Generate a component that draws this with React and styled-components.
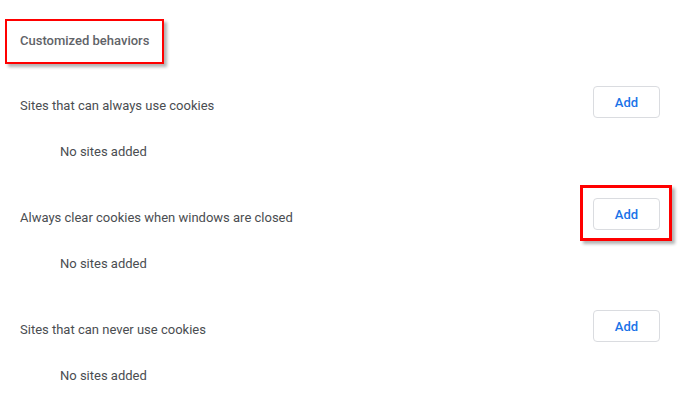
import styled, { createGlobalStyle } from 'styled-components';

const GlobalStyle = createGlobalStyle`
    body {
        margin: 0;
        background: #ffffff;
        font-family: Roboto, "Liberation Sans", sans-serif;
        font-size: 13px;
        color: #4a4d51;
    }
`;

const Page = styled.div`
    padding: 0 19px 0 20px;
`;

const HeadingWrap = styled.div`
    position: relative;
    display: inline-block;
    margin-top: 31px;
`;

const Heading = styled.h2`
    margin: 0;
    font-size: 13px;
    font-weight: 500;
    line-height: 20px;
    color: #5f6368;
`;

const Highlight = styled.div`
    position: absolute;
    top: ${(props) => props.top}px;
    left: ${(props) => props.left}px;
    right: ${(props) => props.right}px;
    bottom: ${(props) => props.bottom}px;
    border: ${(props) => props.thick}px solid #ff0000;
    box-shadow: 3px 3px 3px rgba(0, 0, 0, 0.3);
    pointer-events: none;
`;

const Section = styled.div`
    margin-top: ${(props) => (props.first ? '35px' : '36px')};
`;

const Row = styled.div`
    display: flex;
    align-items: center;
    justify-content: space-between;
    height: 32px;
`;

const Label = styled.div`
    padding-top: 8px;
    line-height: 16px;
`;

const ButtonWrap = styled.div`
    position: relative;
`;

const Button = styled.button`
    width: 67px;
    height: 32px;
    background: #ffffff;
    border: 1px solid #dadce0;
    border-radius: 4px;
    color: #1a73e8;
    font-family: Roboto, "Liberation Sans", sans-serif;
    font-size: 13px;
    font-weight: 500;
    cursor: pointer;
`;

const Empty = styled.div`
    margin-top: 24px;
    padding-left: 40px;
    line-height: 20px;
`;

const sections = [
    { label: 'Sites that can always use cookies' },
    { label: 'Always clear cookies when windows are closed', marked: true },
    { label: 'Sites that can never use cookies' },
];

const App = () => {
    return (
        <Page>
            <GlobalStyle />
            <HeadingWrap>
                <Heading>Customized behaviors</Heading>
                <Highlight top={-12} left={-15} right={-15} bottom={-13} thick={2} />
            </HeadingWrap>
            {sections.map((s, i) => (
                <Section key={s.label} first={i === 0}>
                    <Row>
                        <Label>{s.label}</Label>
                        <ButtonWrap>
                            <Button>Add</Button>
                            {s.marked && <Highlight top={-13} left={-13} right={-12} bottom={-11} thick={3} />}
                        </ButtonWrap>
                    </Row>
                    <Empty>No sites added</Empty>
                </Section>
            ))}
        </Page>
    );
};

export default App;
